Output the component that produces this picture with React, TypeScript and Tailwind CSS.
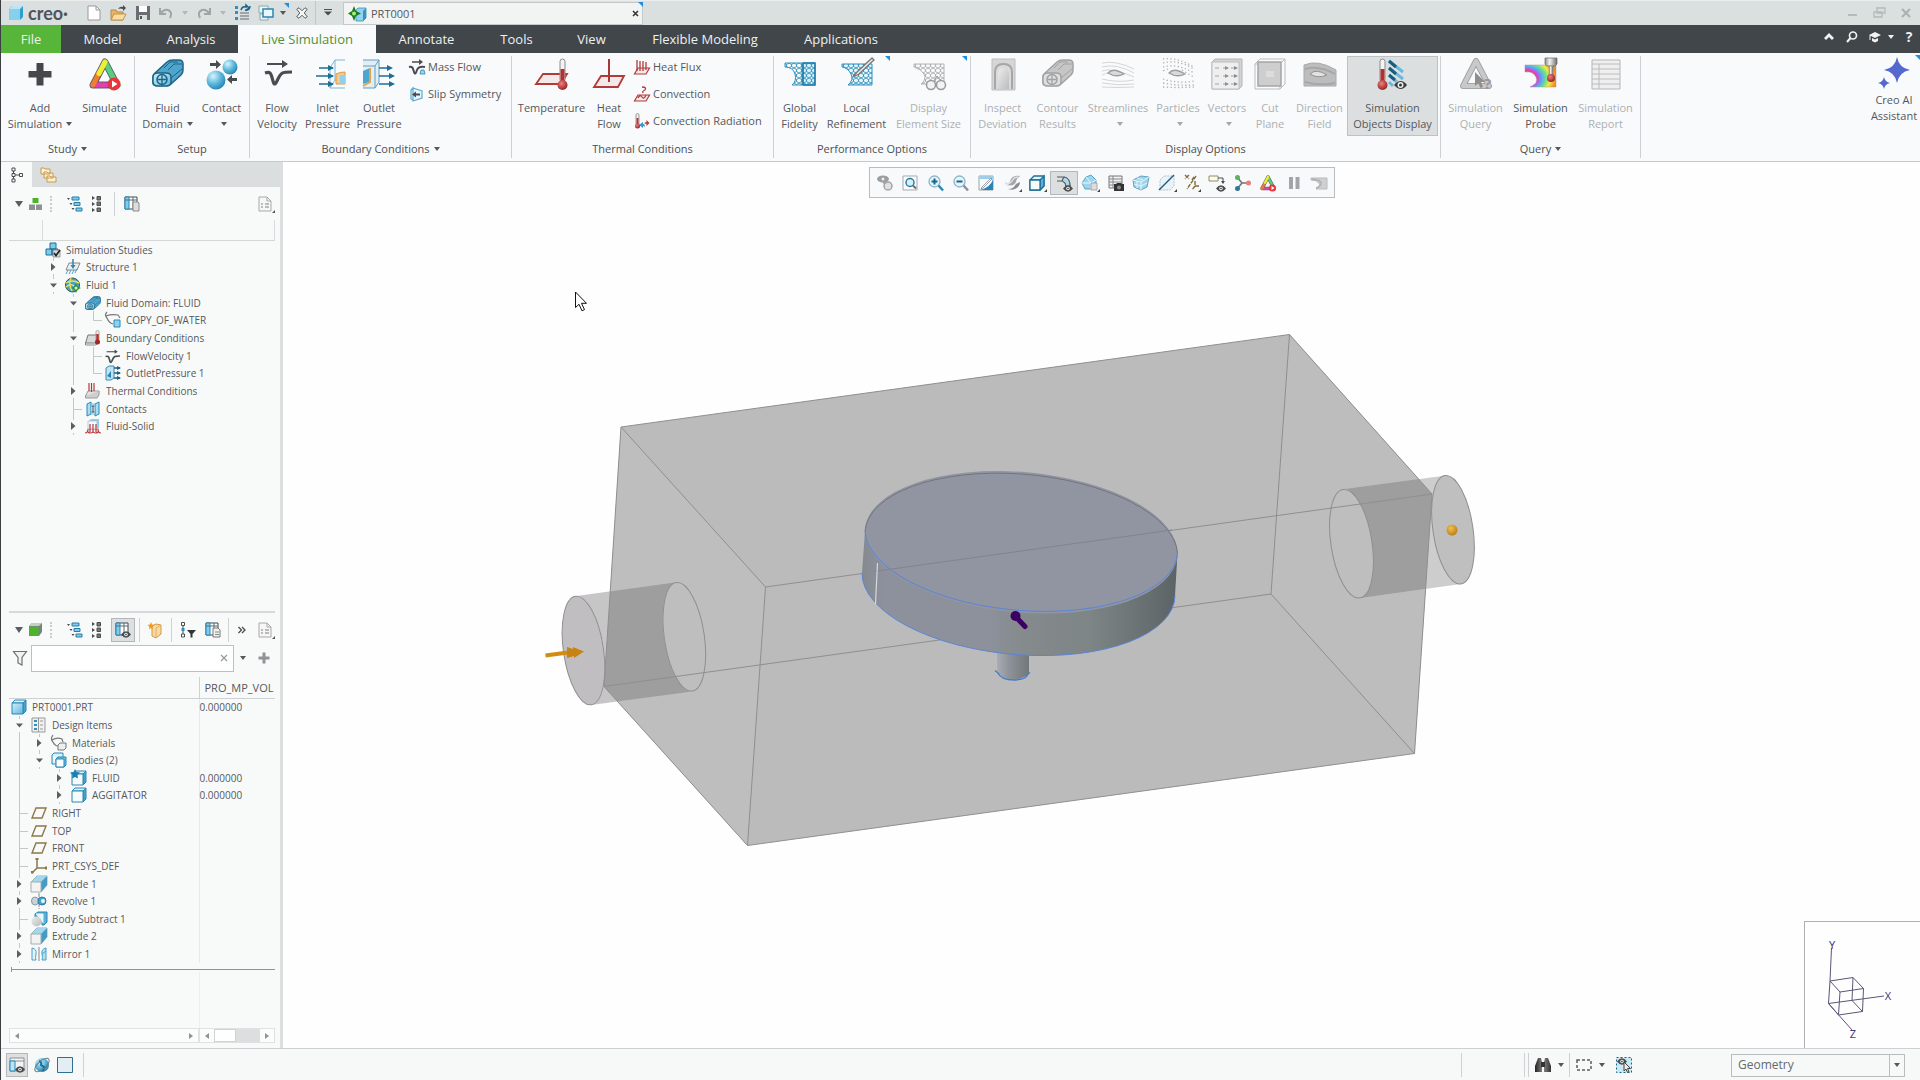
import React, { ReactNode } from "react";

const INK = "#4a4d50";
const BLUE = "#2f8fbf";

function Svg({ s = "size-4", vb = "0 0 16 16", children }: { s?: string; vb?: string; children: ReactNode }) {
  return (
    <svg aria-hidden="true" className={`${s} shrink-0 overflow-visible`} viewBox={vb} fill="none" stroke="none">
      {children}
    </svg>
  );
}

function Big({ children }: { children: ReactNode }) {
  return (
    <Svg s="size-8" vb="0 0 32 32">
      {children}
    </Svg>
  );
}

function Caret({ color = "#55585b" }: { color?: string }) {
  return (
    <svg aria-hidden="true" className="inline-block h-1 w-1.5 shrink-0" viewBox="0 0 6 4">
      <path d="M0 0h6L3 4z" fill={color} />
    </svg>
  );
}

function Corner() {
  return (
    <svg aria-hidden="true" className="size-[5px]" viewBox="0 0 5 5">
      <path d="M0 0h5v5z" fill="#1e8fe0" />
    </svg>
  );
}

function Defs() {
  return (
    <svg aria-hidden="true" className="absolute size-0">
      <defs>
        <linearGradient id="gCyan" x1="0" y1="0" x2="1" y2="1">
          <stop offset="0" stopColor="#d4f1fb" />
          <stop offset="1" stopColor="#5fb4dc" />
        </linearGradient>
        <linearGradient id="gGrey" x1="0" y1="0" x2="1" y2="1">
          <stop offset="0" stopColor="#ececec" />
          <stop offset="1" stopColor="#bcbcbc" />
        </linearGradient>
        <linearGradient id="gDark" x1="0" y1="0" x2="1" y2="0">
          <stop offset="0" stopColor="#222" />
          <stop offset="0.5" stopColor="#8a8a8a" />
          <stop offset="1" stopColor="#333" />
        </linearGradient>
        <radialGradient id="gBall" cx="0.35" cy="0.3" r="0.8">
          <stop offset="0" stopColor="#d8f4fd" />
          <stop offset="0.5" stopColor="#5fb9dd" />
          <stop offset="1" stopColor="#1c7ba8" />
        </radialGradient>
        <radialGradient id="gRed" cx="0.4" cy="0.35" r="0.7">
          <stop offset="0" stopColor="#f08080" />
          <stop offset="1" stopColor="#8f1c1c" />
        </radialGradient>
        <radialGradient id="gProbe" cx="0" cy="0.6" r="1">
          <stop offset="0.3" stopColor="#ee3b3b" />
          <stop offset="0.42" stopColor="#d14bd8" />
          <stop offset="0.54" stopColor="#58a8f6" />
          <stop offset="0.68" stopColor="#6fe08a" />
          <stop offset="0.82" stopColor="#f4ea3d" />
          <stop offset="1" stopColor="#f08a2a" />
        </radialGradient>
        <linearGradient id="gSteel" x1="0" y1="0" x2="1" y2="0">
          <stop offset="0" stopColor="#8d8d8d" />
          <stop offset="0.4" stopColor="#f2f2f2" />
          <stop offset="1" stopColor="#6d6d6d" />
        </linearGradient>
        <pattern id="pMesh" width="5" height="5" patternUnits="userSpaceOnUse">
          <path d="M0 0l2.5 1.5L5 0M2.5 1.5V3.5M0 5l2.5-1.5L5 5" stroke="#2c8cb8" strokeWidth="0.9" fill="none" />
        </pattern>
        <pattern id="pMeshG" width="5" height="5" patternUnits="userSpaceOnUse">
          <path d="M0 0l2.5 1.5L5 0M2.5 1.5V3.5M0 5l2.5-1.5L5 5" stroke="#a9a9a9" strokeWidth="0.9" fill="none" />
        </pattern>
        <linearGradient id="gSide" x1="0" y1="0" x2="1" y2="0">
          <stop offset="0" stopColor="#85898f" />
          <stop offset="0.07" stopColor="#8d919d" />
          <stop offset="0.4" stopColor="#8c919c" />
          <stop offset="0.52" stopColor="#858a8c" />
          <stop offset="0.72" stopColor="#7e8587" />
          <stop offset="0.88" stopColor="#6a7274" />
          <stop offset="1" stopColor="#5b6366" />
        </linearGradient>
        <linearGradient id="gStem" x1="0" y1="0" x2="1" y2="0">
          <stop offset="0" stopColor="#a9adb3" />
          <stop offset="0.35" stopColor="#8f939b" />
          <stop offset="1" stopColor="#71777a" />
        </linearGradient>
        <radialGradient id="gGold" cx="0.4" cy="0.35" r="0.7">
          <stop offset="0" stopColor="#f4c04e" />
          <stop offset="1" stopColor="#b87c12" />
        </radialGradient>
        <clipPath id="boxClip">
          <path d="M621 427L1289.500 334.500 1432 494 1414.500 753.500 747.500 845.500 604 686.500z" />
        </clipPath>
      </defs>
    </svg>
  );
}

/* ---------- shared drawings ---------- */

const Triangle = ({ dim = false }: { dim?: boolean }) =>
  dim ? (
    <g>
      <path d="M16 3L29 28H3z" stroke="#a5a5a5" strokeWidth="6" strokeLinejoin="round" fill="none" />
      <path d="M16 3L29 28H3z" stroke="#c9c9c9" strokeWidth="4" strokeLinejoin="round" fill="none" />
    </g>
  ) : (
    <g strokeLinejoin="round" strokeLinecap="round">
      <path d="M16 4L28 27H4z" stroke="#5d6166" strokeWidth="7" />
      <path d="M16 4L28 27" stroke="#58cf7c" strokeWidth="5" />
      <path d="M28 27L16 27" stroke="#5d3bd0" strokeWidth="5" />
      <path d="M17 27H4" stroke="#e33fae" strokeWidth="5" />
      <path d="M4 27L10 15" stroke="#f27d2d" strokeWidth="5" />
      <path d="M10 15.500L16 4" stroke="#eeee35" strokeWidth="5" />
    </g>
  );

const FluidBlock = ({ a = "url(#gCyan)", b = "#1d6485", c = "#4fa5cc" }: { a?: string; b?: string; c?: string }) => (
  <g stroke={b} strokeWidth="1.500" strokeLinejoin="round">
    <path d="M3 15L15 4q2-2 6-2h6q4 0 4 4v6q0 3-2 5L19 26q-2 1.500-3 1.500H4q-3 0-3-3V19q0-2 2-4z" fill={c} />
    <path d="M1 19q0-4 5-4h8q5 0 5 4v5q0 4-5 4H6q-5 0-5-4z" fill={a} />
    <circle cx="10" cy="21.500" r="5" fill="none" />
    <path d="M10 17v9M5.500 21.500h9" strokeWidth="1.300" />
    <path d="M12 10L18 4h8M16 12l6-6h8M19 20l11-9" strokeWidth="1" fill="none" />
  </g>
);

const Velocity = () => (
  <g stroke={INK} fill="none">
    <path d="M3 6h17" strokeWidth="2" />
    <path d="M18 2l6 4-6 4z" fill={INK} stroke="none" />
    <path d="M1 15c6-2 6 1 8 8 1 4 2 4 4 0 4-9 5-9 15-9" strokeWidth="3.200" />
  </g>
);

const Thermo = ({ x = 0, y = 0 }: { x?: number; y?: number }) => (
  <g transform={`translate(${x} ${y})`}>
    <rect x="2" y="0" width="5" height="23" rx="2.500" fill="#f4f4f4" stroke="#8c8c8c" />
    <rect x="2.500" y="10" width="4" height="15" fill="#b33030" />
    <circle cx="4.500" cy="26" r="5" fill="url(#gRed)" />
  </g>
);

const Cube = ({ light = false }: { light?: boolean }) => (
  <g stroke="#2b86b5" strokeWidth="1" strokeLinejoin="round">
    <path d="M1 4l3-3h11l-3 3z" fill="#d7f2fb" />
    <path d="M15 1v11l-3 3V4z" fill="#49a3cd" />
    <path d="M1 4h11v11H1z" fill={light ? "#f6fbfd" : "url(#gCyan)"} />
  </g>
);

const Doc = () => (
  <g>
    <path d="M2 1h8l4 4v10H2z" fill="#f6f6f6" stroke="#a8a8a8" />
    <path d="M10 1v4h4" stroke="#a8a8a8" />
    <path d="M4 8h2M4 11h2M8 8h4M8 11h4" stroke="#a8a8a8" strokeWidth="1.500" />
    <path d="M18 14v3h-3z" fill="#555" />
  </g>
);

const Eye = ({ x = 0, y = 0 }: { x?: number; y?: number }) => (
  <g transform={`translate(${x} ${y})`}>
    <path d="M0 3.500q5-6.500 10 0q-5 6.500-10 0z" fill="#4b4b4b" />
    <circle cx="5" cy="3.500" r="1.800" fill="#eee" />
    <circle cx="5" cy="3.500" r="0.800" fill="#333" />
  </g>
);

const Columns = ({ children }: { children?: ReactNode }) => (
  <Svg>
    <path d="M1 1h12v12H1z" fill="#fff" stroke="#3f4a50" />
    <path d="M1 1h4v12H1z" fill="#7fcdec" stroke="#2b86b5" />
    <path d="M1 4h12M9 1v12" stroke="#5d6a70" />
    {children}
  </Svg>
);

const OutlineTree = () => (
  <Svg>
    <path d="M0 2h3L1.500 4zM2.500 7h3L4 9zM4.500 12h3L6 14z" fill={INK} />
    <path d="M5 1h7v3H5zM7 6.500h6v3H7zM9 12h6v3H9z" fill="#7fcdec" stroke="#2b7ca6" />
  </Svg>
);

const Branches = () => (
  <Svg>
    <path d="M2 0l3 2-3 2zM2 6l3 2-3 2zM2 12l3 2-3 2z" fill={INK} />
    <path d="M7 0.500h3.500V4H7zM7 6h3.500v3.500H7zM7 12h3.500v3.500H7z" fill="#777" stroke={INK} />
  </Svg>
);

const Grip = () => <span className="h-4 w-0 border-l-2 border-dotted border-[#c9cccc]" />;

/* ---------- ribbon icons ---------- */

const Sheet = ({ d, s = 1.8 }: { d: string; s?: number }) => <path d={d} stroke="#b23a3a" strokeWidth={s} fill="#f3e9e9" />;

const icons = {
  add: (
    <Big>
      <path d="M12.500 5h7v8h8v6.500h-8v8h-7v-8h-8V13h8z" fill="#45484b" />
    </Big>
  ),
  simulate: (
    <Big>
      <Triangle />
      <circle cx="25" cy="26" r="6.500" fill="#e8363c" />
      <path d="M23 22.500l5.500 3.500-5.500 3.500z" fill="#fff" />
    </Big>
  ),
  fluid: (
    <Big>
      <FluidBlock />
    </Big>
  ),
  contact: (
    <Big>
      <circle cx="24" cy="9" r="7.500" fill="url(#gBall)" />
      <circle cx="10" cy="22" r="9.500" fill="url(#gBall)" />
      <path d="M4 5h6V2l5 4.500L10 11V8H4zM31 20h-5v-3l-5 4.500 5 4.500v-3h5z" fill={INK} />
    </Big>
  ),
  velocity: (
    <Big>
      <g transform="translate(3 0)">
        <Velocity />
      </g>
    </Big>
  ),
  inlet: (
    <Big>
      <g transform="translate(3 0)">
        <path d="M15 10l5-8h10M15 10v20h15M20 2v20l-5 8M20 22h10" stroke="#7fb6d3" />
        <path d="M21 16q4-2 9-2v12h-9z" fill="#f6c98a" stroke="#d49a4c" />
        <path d="M25 17h5v9h-5z" fill="#8fd0ee" />
        <path d="M4 10h14M1 18h17M4 26h14" stroke="#1f6f94" strokeWidth="1.500" />
        <path d="M13 7l6 3-6 3zM13 15l6 3-6 3zM13 23l6 3-6 3z" fill="#1f6f94" />
      </g>
    </Big>
  ),
  outlet: (
    <Big>
      <path d="M0 2h16v22L12 30H0M16 2L12 8H0M12 8v22" stroke="#5f9fc2" fill="#e3edf3" />
      <path d="M0 13l7-3v14l-7 2z" fill="#4aa6d3" />
      <path d="M7 10v14l-7 4" stroke="#e0a44c" strokeWidth="2" />
      <path d="M16 10h10M16 18h13M16 26h13" stroke="#1f6f94" strokeWidth="1.500" />
      <path d="M24 7l6 3-6 3zM26 15l6 3-6 3zM26 23l6 3-6 3z" fill="#1f6f94" />
    </Big>
  ),
  temperature: (
    <Big>
      <Sheet d="M7 16h24l-6 10H0z" />
      <Thermo x={22} y={1} />
    </Big>
  ),
  heatFlow: (
    <Big>
      <Sheet d="M8 18h23l-6 11H1z" />
      <path d="M16 1v23" stroke="#a83838" strokeWidth="2" />
    </Big>
  ),
  fidelity: (
    <Big>
      <path d="M1 5h17v22H8q5-4 3-11T1 9z" fill="url(#pMesh)" stroke={BLUE} />
      <path d="M19 5h12v22H19z" fill="#d4effa" stroke={BLUE} />
      <path d="M19 5h12v22H19z" fill="url(#pMesh)" stroke="#1f7ca8" strokeWidth="1.500" />
    </Big>
  ),
  refine: (
    <Big>
      <path d="M1 6h30v21H7q6-5 3-11T1 9z" fill="#e4f5fc" />
      <path d="M1 6h30v21H7q6-5 3-11T1 9z" fill="url(#pMesh)" stroke={BLUE} />
      <path d="M31 0L16 14l-4 5 6-3L33 2z" fill="#e9e9e9" stroke="#777" strokeWidth="1.300" />
    </Big>
  ),
  elemSize: (
    <Big>
      <path d="M1 6h30v20H8q6-5 3-10T1 9z" fill="url(#pMeshG)" stroke="#b4b4b4" />
      <circle cx="18" cy="27" r="4.500" fill="#f3f3f3" stroke="#999" strokeWidth="1.500" />
      <circle cx="28" cy="27" r="4.500" fill="#f3f3f3" stroke="#999" strokeWidth="1.500" />
      <path d="M21 23l3-5 4 5" stroke="#999" />
    </Big>
  ),
  inspect: (
    <Big>
      <path d="M5 1h23v31H5z" fill="#d6d6d6" stroke="#bdbdbd" />
      <path d="M8 31V14q0-8 8.500-8T25 14v17" fill="#dadada" stroke="#a6a6a6" strokeWidth="2" />
      <path d="M11 31V16q0-6 5.500-6T22 16v15z" fill="url(#gGrey)" />
    </Big>
  ),
  contour: (
    <Big>
      <FluidBlock a="#dedede" b="#a2a2a2" c="#c6c6c6" />
    </Big>
  ),
  stream: (
    <Big>
      <path d="M0 5q14-3 32 6M0 9q14-4 32 6M0 13q10-4 32 6M0 17q4-2 6-2M0 21q16 4 32 1M0 25q16 3 32 1M0 29q16 1 32 0" stroke="#d6d6d6" />
      <path d="M6 15q5-6 16 1-8 4-16-1z" fill="#dadada" stroke="#9d9d9d" strokeWidth="1.300" />
    </Big>
  ),
  particles: (
    <Big>
      <path
        d="M1 1q14-2 31 8M1 5q14-4 31 6M1 9q14-4 31 6M1 13q4-2 6-2M20 12q6 4 12 7M1 21q16 5 31 2M1 25q16 3 31 2M1 29q16 1 31 0"
        stroke="#b0b0b0"
        strokeWidth="1.300"
        strokeDasharray="1.300 2.400"
      />
      <path d="M7 15q5-6 16 1-8 4-16-1z" fill="#dadada" stroke="#9d9d9d" strokeWidth="1.300" />
    </Big>
  ),
  vectors: (
    <Big>
      <path d="M1 4l3-3h27v27l-3 3H1z" fill="#d3d3d3" stroke="#b4b4b4" />
      <path d="M1 4h27v27H1z" fill="#efefef" stroke="#bdbdbd" />
      <path d="M4 10h5M4 18h5M4 26h5M12 10h5M12 18h5M12 26h5M20 10h6M20 18h6M20 26h6" stroke="#a4a4a4" strokeWidth="1.200" strokeDasharray="4 1" />
      <path d="M23 8l4 2-4 2zM23 16l4 2-4 2zM23 24l4 2-4 2zM14 8l4 2-4 2zM14 16l4 2-4 2zM14 24l4 2-4 2z" fill="#8e8e8e" />
    </Big>
  ),
  cut: (
    <Big>
      <path d="M1 6l5-5h25v25l-5 5H1zM1 6h25v25M26 6l5-5" stroke="#bdbdbd" />
      <path d="M4 4h23v24H4z" fill="#cecece" stroke="#a5a5a5" strokeWidth="1.500" />
      <path d="M12 13h8v6h-8z" fill="#dcdcdc" />
    </Big>
  ),
  direction: (
    <Big>
      <path d="M0 7q14-6 32 5v16H0z" fill="#bdbdbd" stroke="#a8a8a8" />
      <path d="M1 11q14-4 30 5M1 24q14 4 30 1" stroke="#a7a7a7" strokeWidth="2" />
      <path d="M6 16q6-6 17 1-9 4-17-1z" fill="#e2e2e2" stroke="#919191" />
    </Big>
  ),
  objects: (
    <Big>
      <Thermo x={1} y={1} />
      <path d="M12 3l14 11M12 10l14 11M12 17l8 7M12 24l4 4" stroke="#69b9dc" strokeWidth="3" />
      <path d="M12 3l7 6M12 10l7 6M12 17l6 5" stroke="#1c5d7f" strokeWidth="3" />
      <path d="M17 27q7-8 13 0q-6 8-13 0z" fill="#3c3c3c" />
      <circle cx="23.500" cy="27" r="3" fill="#eee" />
      <circle cx="23.500" cy="27" r="1.500" fill="#333" />
    </Big>
  ),
  query: (
    <Big>
      <Triangle dim />
      <path d="M15 14v14l3.500-3 2 5 2.500-1-2-5h4z" fill="#8e8e8e" />
      <text x="24" y="31" fontSize="15" fontFamily="Noto Sans" fontWeight="700" fill="#999">
        ?
      </text>
    </Big>
  ),
  probe: (
    <Big>
      <path d="M0 7h31v22H5q9-4 6-10T0 14z" fill="url(#gProbe)" stroke="#999" strokeWidth="0.500" />
      <path d="M20 0h12v6l-2 2h-8l-2-2z" fill="url(#gSteel)" stroke="#666" strokeWidth="0.700" />
      <path d="M24 8h4v9h-4z" fill="url(#gSteel)" stroke="#777" strokeWidth="0.500" />
      <circle cx="26" cy="20" r="4" fill="url(#gRed)" />
    </Big>
  ),
  report: (
    <Big>
      <path d="M2 2h28v29H2z" fill="#efefef" stroke="#b5b5b5" />
      <path d="M2 6h28M2 11h28M2 16h28M2 21h28M2 26h28M9 6v25" stroke="#bcbcbc" />
    </Big>
  ),
  ai: (
    <Big>
      <path d="M19 0q2 11 13 13-11 2-13 13Q17 15 6 13 17 11 19 0z" fill="#5468cf" />
      <path d="M6 20q1 5 6 6-5 1-6 6-1-5-6-6 5-1 6-6z" fill="#5468cf" />
    </Big>
  ),
  massFlow: (
    <Svg>
      <path d="M3 3h9" stroke={INK} strokeWidth="1.500" />
      <path d="M10 0l4 3-4 3z" fill={INK} />
      <path d="M0 8c4-1 4 2 5 5s2 1 3-2 3-4 8-3" stroke={INK} strokeWidth="2" />
      <path d="M11 15l1-4h3l1 4z" fill="#9ad6ef" stroke="#2b86b5" strokeWidth="0.800" />
    </Svg>
  ),
  slip: (
    <Svg>
      <path d="M2 4l2-2v12l-2-1zM4 2l9 3v7l-9 3z" fill="#e7f6fc" stroke="#5aacd2" strokeWidth="1.200" />
      <path d="M3 8.500l4-3v2h4v2H7v2z" fill={INK} />
    </Svg>
  ),
  heatFlux: (
    <Svg>
      <Sheet d="M4 9h11.500L12 15H0.500z" s={1.2} />
      <path d="M3 1v11M6 2v10M9 2v10M12 3v8" stroke="#b23a3a" strokeWidth="1.300" />
    </Svg>
  ),
  convection: (
    <Svg>
      <Sheet d="M4 9h11.500L12 15H0.500z" s={1.2} />
      <path d="M8 1q5 0 3 3-3 1-2 3M4 12q2-4 4-1t4-2" stroke="#b23a3a" strokeWidth="1.300" />
    </Svg>
  ),
  radiation: (
    <Svg>
      <rect x="2" y="0.500" width="3" height="12" rx="1.500" fill="#eee" stroke="#777" strokeWidth="0.700" />
      <path d="M3.500 5v8" stroke="#b23a3a" strokeWidth="2" />
      <circle cx="3.500" cy="13" r="2.500" fill="url(#gRed)" />
      <path d="M5 12l4-3v2q2 0 2 3-1-1-2-1v2z" fill="#3a97c9" />
      <path d="M15.500 10l-3-3v2q-2 0-2 2 1-.5 2-.5V13z" fill="#c03636" />
    </Svg>
  ),
};

function RibbonButton({
  w,
  icon,
  lines,
  caret,
  dim,
  active,
  corner,
}: {
  w: string;
  icon: ReactNode;
  lines: string[];
  caret?: boolean;
  dim?: boolean;
  active?: boolean;
  corner?: boolean;
}) {
  return (
    <button
      type="button"
      className={`relative flex h-20 shrink-0 flex-col items-center whitespace-nowrap text-[11px] leading-4 ${w} ${
        dim ? "text-[#adb0b2]" : "text-[#55585b]"
      } ${active ? "border border-[#bfc2c4] bg-[#dcdfe0] pt-px" : "pt-[2px]"}`}
    >
      {icon}
      <span className="mt-[10px]">{lines[0]}</span>
      <span className="flex items-center gap-1">
        {lines[1] || <span className="invisible w-0">.</span>}
        {caret && <Caret color={dim ? "#a5a8aa" : "#55585b"} />}
      </span>
      {corner && (
        <span className="absolute top-0 right-0">
          <Corner />
        </span>
      )}
    </button>
  );
}

function SmallButton({ icon, label }: { icon: ReactNode; label: string }) {
  return (
    <button type="button" className="flex h-[27px] items-start gap-[3px] pt-[3px] text-[11px] leading-4 whitespace-nowrap text-[#55585b]">
      {icon}
      {label}
    </button>
  );
}

function Group({ w, label, caret, pad, children }: { w: string; label: string; caret?: boolean; pad: string; children: ReactNode }) {
  return (
    <section className={`my-[3px] flex shrink-0 flex-col border-r border-[#cdd1d3] ${w}`} aria-label={label}>
      <div className={`flex h-20 items-start ${pad}`}>{children}</div>
      <div className="mt-[5px] flex items-center justify-center gap-1 text-[11px] leading-4 text-[#4c4f52]">
        {label}
        {caret && <Caret />}
      </div>
    </section>
  );
}

function Ribbon() {
  return (
    <div className="flex h-[109px] shrink-0 items-stretch border-b border-[#c6caca] bg-[#f8fafc]">
      <Group w="w-[134px]" label="Study" caret pad="">
        <RibbonButton w="w-[78px]" icon={icons.add} lines={["Add", "Simulation"]} caret />
        <RibbonButton w="w-[51px]" icon={icons.simulate} lines={["Simulate"]} />
      </Group>
      <Group w="w-[115px]" label="Setup" caret={false} pad="pl-1">
        <RibbonButton w="w-[57px]" icon={icons.fluid} lines={["Fluid", "Domain"]} caret />
        <RibbonButton w="w-[51px]" icon={icons.contact} lines={["Contact"]} caret />
      </Group>
      <Group w="w-[262px]" label="Boundary Conditions" caret pad="pl-[2px]">
        <RibbonButton w="w-[50px]" icon={icons.velocity} lines={["Flow", "Velocity"]} />
        <RibbonButton w="w-[51px]" icon={icons.inlet} lines={["Inlet", "Pressure"]} />
        <RibbonButton w="w-[52px]" icon={icons.outlet} lines={["Outlet", "Pressure"]} />
        <div className="flex flex-col pl-1">
          <SmallButton icon={icons.massFlow} label="Mass Flow" />
          <SmallButton icon={icons.slip} label="Slip Symmetry" />
        </div>
      </Group>
      <Group w="w-[262px]" label="Thermal Conditions" pad="pl-[2px]">
        <RibbonButton w="w-[75px]" icon={icons.temperature} lines={["Temperature"]} />
        <RibbonButton w="w-[40px]" icon={icons.heatFlow} lines={["Heat", "Flow"]} />
        <div className="flex flex-col pl-[5px]">
          <SmallButton icon={icons.heatFlux} label="Heat Flux" />
          <SmallButton icon={icons.convection} label="Convection" />
          <SmallButton icon={icons.radiation} label="Convection Radiation" />
        </div>
      </Group>
      <Group w="w-[197px]" label="Performance Options" pad="pl-[2px]">
        <RibbonButton w="w-[47px]" icon={icons.fidelity} lines={["Global", "Fidelity"]} />
        <RibbonButton w="w-[67px]" icon={icons.refine} lines={["Local", "Refinement"]} corner />
        <RibbonButton w="w-[77px]" icon={icons.elemSize} lines={["Display", "Element Size"]} dim corner />
      </Group>
      <Group w="w-[470px]" label="Display Options" pad="pl-[5px]">
        <RibbonButton w="w-[53px]" icon={icons.inspect} lines={["Inspect", "Deviation"]} dim />
        <RibbonButton w="w-[57px]" icon={icons.contour} lines={["Contour", "Results"]} dim />
        <RibbonButton w="w-[64px]" icon={icons.stream} lines={["Streamlines"]} caret dim />
        <RibbonButton w="w-[56px]" icon={icons.particles} lines={["Particles"]} caret dim />
        <RibbonButton w="w-[42px]" icon={icons.vectors} lines={["Vectors"]} caret dim />
        <RibbonButton w="w-[44px]" icon={icons.cut} lines={["Cut", "Plane"]} dim />
        <RibbonButton w="w-[55px]" icon={icons.direction} lines={["Direction", "Field"]} dim />
        <RibbonButton w="w-[91px]" icon={icons.objects} lines={["Simulation", "Objects Display"]} active />
      </Group>
      <Group w="w-[200px]" label="Query" caret pad="pl-[2px]">
        <RibbonButton w="w-[65px]" icon={icons.query} lines={["Simulation", "Query"]} dim />
        <RibbonButton w="w-[65px]" icon={icons.probe} lines={["Simulation", "Probe"]} />
        <RibbonButton w="w-[65px]" icon={icons.report} lines={["Simulation", "Report"]} dim />
      </Group>
      <button
        type="button"
        className="relative ml-auto flex w-[52px] flex-col items-center pt-1 text-[11px] leading-4 whitespace-nowrap text-[#55585b]"
      >
        {icons.ai}
        <span className="mt-[3px]">Creo AI</span>
        <span>Assistant</span>
        <span className="absolute top-[2px] right-0">
          <Corner />
        </span>
      </button>
    </div>
  );
}

/* ---------- title bar and menu ---------- */

function TB({ w, label, children }: { w: string; label: string; children: ReactNode }) {
  return (
    <button type="button" aria-label={label} className={`relative flex h-6 shrink-0 items-center justify-center ${w}`}>
      {children}
    </button>
  );
}

function TitleBar() {
  return (
    <header className="flex h-[25px] shrink-0 items-center border-t border-[#eceeee] bg-[#dadfe0]">
      <div className="flex w-[81px] items-center gap-1 pl-[7px]">
        <Svg>
          <path d="M1 4l3-3h11v11l-3 3H1z" fill="#2f9fd0" />
          <path d="M1 4h11v11H1z" fill="#86d0ec" />
          <path d="M1 4l3-3h11l-3 3z" fill="#b9e6f6" />
        </Svg>
        <span className="font-['Lato'] text-[18px] leading-5 font-bold text-[#50555a]">creo·</span>
      </div>
      <TB w="w-[24px]" label="New">
        <Svg>
          <path d="M2 1h8l4 4v10H2z" fill="#fff" stroke="#9a9a9a" />
          <path d="M10 1v4h4" stroke="#9a9a9a" />
        </Svg>
      </TB>
      <TB w="w-[24px]" label="Open">
        <Svg>
          <path d="M1 15V5h5l1 2h6v8z" fill="#e5b469" stroke="#b98a45" />
          <path d="M1 15l3-6h12l-3 6z" fill="#fbdca4" stroke="#c3954e" />
          <path d="M8 4q2-3 5-2V0l3 3-3 3V4q-3-1-5 0z" fill={INK} />
        </Svg>
      </TB>
      <TB w="w-[25px]" label="Save">
        <Svg>
          <path d="M1 1h14v14H1z" fill="#6a6e72" />
          <path d="M4 1h8v6H4z" fill="#fff" />
          <path d="M4 10h8v5H4z" fill="#dcdfe0" />
          <path d="M5 11h2v3H5z" fill="#555" />
        </Svg>
      </TB>
      <TB w="w-[22px]" label="Undo">
        <Svg>
          <path d="M2 3v6h6M3 8q3-4 7-3 5 2 2 8" stroke="#9fa4a6" strokeWidth="2" />
        </Svg>
      </TB>
      <TB w="w-[16px]" label="Undo list">
        <Caret color="#b3b8ba" />
      </TB>
      <TB w="w-[22px]" label="Redo">
        <Svg>
          <path d="M14 3v6H8M13 8q-3-4-7-3-5 2-2 8" stroke="#9fa4a6" strokeWidth="2" />
        </Svg>
      </TB>
      <TB w="w-[16px]" label="Redo list">
        <Caret color="#b3b8ba" />
      </TB>
      <TB w="w-[23px]" label="Regenerate">
        <Svg>
          <path d="M0 1h3v3H0zM0 6h3v3H0zM0 12h3v3H0z" fill={BLUE} />
          <path d="M5 8h9M5 11h9M5 14h9" stroke="#8e9396" strokeWidth="1.500" />
          <path d="M6 5q1-4 5-3V0l3 3-3 2M15 1q0 5-5 4" stroke="#17668c" strokeWidth="1.500" />
        </Svg>
      </TB>
      <TB w="w-[23px]" label="Windows">
        <Svg>
          <path d="M1 1h9v7H1zM2 9h8v6H2z" stroke="#8aa" fill="#eef4f6" />
          <path d="M5 4h10v8H5z" stroke="#2b86b5" strokeWidth="1.500" fill="#e9f6fb" />
        </Svg>
      </TB>
      <TB w="w-[12px]" label="Windows list">
        <Caret />
        <span className="absolute top-0.5 right-0">
          <Corner />
        </span>
      </TB>
      <TB w="w-[26px]" label="Close window">
        <Svg s="size-3">
          <path d="M1 3l3-2 4 4 4-4 3 2-4 5 4 5-3 2-4-4-4 4-3-2 4-5z" fill="#f4f4f4" stroke="#55595c" strokeWidth="1.300" />
        </Svg>
      </TB>
      <span className="h-full w-px bg-[#c2c7c9]" />
      <TB w="w-[23px]" label="Customize toolbar">
        <svg aria-hidden="true" className="h-2 w-2" viewBox="0 0 8 8">
          <path d="M0 0.500h8" stroke={INK} />
          <path d="M0 2.500h8l-4 4z" fill={INK} />
        </svg>
      </TB>
      <div className="relative ml-1 flex h-[23px] w-[300px] items-center gap-1 border border-[#c3c8ca] bg-[#f2f3f3] pt-px pl-1">
        <Svg s="h-4 w-[19px]" vb="0 0 19 16">
          <path d="M8 4l2-2h8v10l-3 3H8z" fill="#8fd3ee" stroke="#3b90b8" strokeWidth="0.800" />
          <path d="M15 5l3-3v10l-3 3z" fill="#3a93bf" />
          <path d="M6 0l2 5 5 2.500-5 2.500-2 5-2-5-4-2.500L4 5z" fill="#1e7d1b" />
          <circle cx="6" cy="7.500" r="2" fill="#a5ef7c" />
        </Svg>
        <span className="text-[11px] leading-4 text-[#55585b]">PRT0001</span>
        <button type="button" aria-label="Close tab" className="absolute right-0.5 bottom-1.5 size-2">
          <Svg s="size-[7px]" vb="0 0 7 7">
            <path d="M1 1l5 5M6 1L1 6" stroke="#333" strokeWidth="1.500" />
          </Svg>
        </button>
        <span className="absolute -top-px -right-px">
          <Corner />
        </span>
      </div>
      <div className="ml-auto flex items-center gap-[11px] pr-[6px]">
        <TB w="w-4" label="Minimize">
          <Svg>
            <path d="M4 10h9" stroke="#b4babc" strokeWidth="2" />
          </Svg>
        </TB>
        <TB w="w-4" label="Restore">
          <Svg>
            <path d="M6 3h8v5H6zM3 7h8v5H3z" fill="#dadfe0" stroke="#b4babc" strokeWidth="1.300" />
          </Svg>
        </TB>
        <TB w="w-4" label="Close">
          <Svg>
            <path d="M4 4l8 8M12 4l-8 8" stroke="#aab0b2" strokeWidth="2" />
          </Svg>
        </TB>
      </div>
    </header>
  );
}

const menu: [string, string][] = [
  ["Model", "w-[83px]"],
  ["Analysis", "w-[94px]"],
  ["Live Simulation", "w-[138px]"],
  ["Annotate", "w-[101px]"],
  ["Tools", "w-[79px]"],
  ["View", "w-[71px]"],
  ["Flexible Modeling", "w-[156px]"],
  ["Applications", "w-[116px]"],
];

function MenuBar() {
  return (
    <nav className="flex h-[28px] shrink-0 bg-[#40464a] text-[13px] leading-7 text-[#eef0f1]">
      <button type="button" className="w-[60px] bg-[#57b63a]">
        File
      </button>
      {menu.map(([name, w]) => (
        <button key={name} type="button" className={`${w} ${name === "Live Simulation" ? "bg-[#f8fafc] text-[#4f9138]" : ""}`}>
          {name}
        </button>
      ))}
      <div className="ml-auto flex items-center gap-[7px] pr-[3px] pb-1">
        <button type="button" aria-label="Minimize ribbon" className="pr-1">
          <Svg s="size-3" vb="0 0 12 12">
            <path d="M6 2l5 5-2 2-3-3-3 3-2-2z" fill="#f2f2f2" />
          </Svg>
        </button>
        <button type="button" aria-label="Search" className="pr-1">
          <Svg s="size-3" vb="0 0 12 12">
            <circle cx="7" cy="4.500" r="3.500" stroke="#f2f2f2" strokeWidth="1.700" />
            <path d="M4.500 7L1 11" stroke="#f2f2f2" strokeWidth="2" />
          </Svg>
        </button>
        <button type="button" aria-label="Learning">
          <Svg s="size-3" vb="0 0 12 12">
            <path d="M0 4l6-3 6 3-6 3zM3 7l3 1.500L9 7v3l-3 1.500L3 10zM0.500 4.500h1V9h-1z" fill="#f2f2f2" />
          </Svg>
        </button>
        <Caret color="#f2f2f2" />
        <button type="button" aria-label="Help" className="w-4 text-[14px] leading-6 font-bold">
          ?
        </button>
      </div>
    </nav>
  );
}

/* ---------- trees ---------- */

const t = {
  studies: (
    <Svg>
      <path d="M5 1h6v6H5zM1 7h6v6H1zM7 7h6v6H7z" fill="#7ccbea" stroke="#1f6f96" />
      <path d="M8 8h7v7H8z" fill="#d9d9d9" stroke="#777" strokeWidth="0.700" />
      <path d="M9 11l2 2.500L15 8" stroke="#222" strokeWidth="1.700" />
    </Svg>
  ),
  structure: (
    <Svg>
      <path d="M4 4h11l-3 7H1z" fill="#ededed" stroke="#888" />
      <path d="M8 0v8" stroke="#2b86b5" strokeWidth="1.500" />
      <path d="M5.500 6h5L8 10z" fill="#2b86b5" />
      <path d="M3 11l-2 4M6 11l-2 4M9 11l-2 4M12 10l-2 4" stroke="#4aa0cc" />
    </Svg>
  ),
  fluid: (
    <Svg>
      <circle cx="7.500" cy="8" r="7" fill="#4aa0cc" stroke="#356" />
      <path d="M1 6q6-4 13 0M1 10q5-4 8-1M6 1q-3 6 1 13" stroke="#e8e05a" strokeWidth="1.500" />
      <path d="M11 6l1.500 3.500L16 11l-3.500 1.500L11 16l-1.500-3.500L6 11l3.500-1.500z" fill="#2f8f1f" />
      <circle cx="11" cy="11" r="1.500" fill="#d8f5c0" />
    </Svg>
  ),
  domain: (
    <Svg vb="0 0 32 30">
      <FluidBlock />
    </Svg>
  ),
  copy: (
    <Svg>
      <path d="M2 0q-3 3 0 6M1 4q5-2 12-1l2 3M2 6q2 5 6 6" stroke="#777" strokeWidth="1.200" />
      <path d="M9 8h6v7H9z" fill="#8ed4f0" stroke="#2b86b5" />
    </Svg>
  ),
  boundary: (
    <Svg>
      <path d="M3 5h10l-2 8H0.500z" fill="#d9d9d9" stroke="#777" />
      <path d="M0.500 13v2H11l4-4" stroke="#888" />
      <rect x="11" y="0.500" width="3" height="11" rx="1.500" fill="#f5f5f5" stroke="#888" strokeWidth="0.700" />
      <path d="M12.500 4v8" stroke="#b33030" strokeWidth="2.500" />
      <circle cx="12.500" cy="12" r="2.500" fill="#a52626" />
    </Svg>
  ),
  velocity: (
    <Svg vb="0 0 30 28">
      <Velocity />
    </Svg>
  ),
  outlet: (
    <Svg>
      <path d="M1 3l3-2h5v12l-3 2H1z" fill="#bfe3f2" stroke="#3c88af" />
      <path d="M2 11l4-5v7z" fill="#2b86b5" />
      <path d="M9 3h6M9 8h6M9 13h6" stroke="#1f5f80" strokeWidth="1.500" />
      <path d="M12 1l4 2-4 2zM12 6l4 2-4 2zM12 11l4 2-4 2z" fill="#1f5f80" />
    </Svg>
  ),
  thermal: (
    <Svg>
      <path d="M3 8h11l-1 5H0.500z" fill="#e2e2e2" stroke="#999" />
      <path d="M0.500 13v2H12l2-3V8" stroke="#999" fill="#cfcfcf" />
      <path d="M4 0v8M6.500 0v9M9 0v8" stroke="#b33a3a" strokeWidth="1.200" />
    </Svg>
  ),
  contacts: (
    <Svg>
      <path d="M2 3l4-2v12l-4 2zM10 3l4-2v12l-4 2z" fill="#a9def2" stroke="#2b86b5" />
      <path d="M6 3h4v10H6z" fill="#d4eff9" stroke="#5aacd2" strokeWidth="0.700" />
      <path d="M8 5v6M6.500 5h3M6.500 11h3" stroke={INK} />
    </Svg>
  ),
  fluidSolid: (
    <Svg>
      <path d="M4 3l2-2h8v9l-2 2H4z" fill="#8fd0ec" />
      <path d="M3 3h9v8H3z" fill="#f5f8fa" stroke="#9bbccc" strokeWidth="0.700" />
      <path d="M5 6v8M8 6v8M11 6v8M0 15q3 0 3-4M16 15q-3 0-3-4M3 14q2 2 5 0 3 2 5 0" stroke="#c03636" strokeWidth="1.200" />
    </Svg>
  ),
  part: (
    <Svg>
      <Cube />
    </Svg>
  ),
  body: (
    <Svg>
      <Cube light />
    </Svg>
  ),
  fluidBody: (
    <Svg>
      <Cube light />
      <path d="M4 -1l1.500 3 3.500.5-2.500 2.500.5 3.500L4 7 1 8.500 1.500 5-1 2.500 2.500 2z" fill="#1c7fb2" />
    </Svg>
  ),
  bodies: (
    <Svg>
      <path d="M1 3l2-2h9v9M1 3v9h3" fill="#d9f1fa" stroke="#2b86b5" />
      <path d="M5 7l2-2h8v8l-2 2H5z" fill="#6bbfe2" stroke="#2b86b5" />
      <path d="M5 7h8v8H5z" fill="#f8fcfe" stroke="#2b86b5" />
    </Svg>
  ),
  design: (
    <Svg>
      <path d="M1 1h13v14H1z" fill="#f1f1f1" stroke="#999" />
      <path d="M3 3h3v2H3zM3 7h3v2H3zM3 11h3v2H3z" fill={BLUE} />
      <path d="M9 4h3M9 8h3M9 12h3M7.500 1v14" stroke="#999" />
    </Svg>
  ),
  materials: (
    <Svg>
      <path d="M2 0q-3 4 0 7M1 5q5-3 10-1l1 3M2 7q2 4 5 4" stroke="#777" strokeWidth="1.200" />
      <path d="M7 10l2-2h6v5l-2 2H7z" fill="#eee" stroke="#777" />
    </Svg>
  ),
  plane: (
    <Svg>
      <path d="M5 3h10l-4 10H1z" stroke="#8c7747" strokeWidth="1.400" />
    </Svg>
  ),
  csys: (
    <Svg>
      <path d="M6 1v9h9M6 10l-5 5" stroke="#8c7747" strokeWidth="1.500" />
      <path d="M4.500 0h3v2h-3zM14 8.500h2v3h-2zM0 13h2.500v2.500H0z" fill="#8c7747" />
    </Svg>
  ),
  extrude: (
    <Svg>
      <path d="M0 6l6-6h10v9l-6 7z" fill="#3f9ec8" stroke="#6d8c9a" strokeWidth="0.700" />
      <path d="M0 6l6-6h10l-6 6z" fill="#a5d6ea" />
      <path d="M0 6h10v10H0z" fill="#f3f3f3" stroke="#a3adb1" />
    </Svg>
  ),
  revolve: (
    <Svg>
      <path d="M8 0v16" stroke="#888" strokeDasharray="4 1" />
      <ellipse cx="4" cy="8" rx="3.500" ry="4" fill="#c9d3d8" stroke="#88979e" />
      <ellipse cx="11" cy="8" rx="4" ry="4" fill="#46a4cf" stroke="#2b7ca6" />
      <circle cx="12" cy="8" r="2" fill="#e8f6fc" />
    </Svg>
  ),
  subtract: (
    <Svg>
      <path d="M4 3l3-2h9v10l-3 3h-2q1-7-7-8z" fill="#58b1d9" stroke="#2b86b5" />
      <path d="M5 3h7v9" fill="#eaf6fb" stroke="#eaf6fb" />
      <circle cx="5.500" cy="10.500" r="5" fill="url(#gGrey)" />
    </Svg>
  ),
  mirror: (
    <Svg>
      <path d="M1 2q5 1 4 6-1 4 0 6H1z" fill="#e3f4fb" stroke="#4aa0cc" />
      <path d="M8 1v14" stroke="#888" />
      <path d="M15 2q-5 1-4 6 1 4 0 6h4zM11 8l4-3" fill="#b3dff1" stroke="#4aa0cc" />
    </Svg>
  ),
};

/* One 20px wide cell of a tree row's indentation. */
function Guide({ kind }: { kind: string }) {
  const line = "#c3c7c9";
  return (
    <svg aria-hidden="true" className="h-4 w-5 shrink-0 overflow-visible" viewBox="0 0 20 16" fill="none">
      {kind === "|" && <path d="M8.500 -1v18" stroke={line} />}
      {kind === "T" && <path d="M8.500 -1v18M9 8.500h8" stroke={line} />}
      {kind === "L" && <path d="M8.500 -1v9.500h8.500" stroke={line} />}
      {(kind === ">" || kind === "v") && <path d="M8.500 -1v3M8.500 15v2" stroke={line} />}
      {kind === ">" && <path d="M6 4l4.500 4-4.500 4z" fill="#5b5e61" />}
      {kind === "v" && <path d="M5 6.500h7L8.500 10.500z" fill="#5b5e61" />}
    </svg>
  );
}

function Label({ guides, icon, text }: { guides: string; icon: ReactNode; text: string }) {
  return (
    <span className="flex h-4 items-center whitespace-nowrap">
      {guides.split("").map((g, i) => (
        <Guide key={i} kind={g} />
      ))}
      {icon}
      <span className="ml-[5px]">{text}</span>
    </span>
  );
}

const simTree: [string, ReactNode, string][] = [
  ["", t.studies, "Simulation Studies"],
  [">", t.structure, "Structure 1"],
  ["v", t.fluid, "Fluid 1"],
  [" v", t.domain, "Fluid Domain: FLUID"],
  [" |L", t.copy, "COPY_OF_WATER"],
  [" v", t.boundary, "Boundary Conditions"],
  [" |T", t.velocity, "FlowVelocity 1"],
  [" |L", t.outlet, "OutletPressure 1"],
  [" >", t.thermal, "Thermal Conditions"],
  [" T", t.contacts, "Contacts"],
  [" >", t.fluidSolid, "Fluid-Solid"],
];

const modelTree: [string, ReactNode, string, string][] = [
  ["", t.part, "PRT0001.PRT", "0.000000"],
  ["v", t.design, "Design Items", ""],
  ["|>", t.materials, "Materials", ""],
  ["|v", t.bodies, "Bodies (2)", ""],
  ["| >", t.fluidBody, "FLUID", "0.000000"],
  ["| >", t.body, "AGGITATOR", "0.000000"],
  ["T", t.plane, "RIGHT", ""],
  ["T", t.plane, "TOP", ""],
  ["T", t.plane, "FRONT", ""],
  ["T", t.csys, "PRT_CSYS_DEF", ""],
  [">", t.extrude, "Extrude 1", ""],
  [">", t.revolve, "Revolve 1", ""],
  ["T", t.subtract, "Body Subtract 1", ""],
  [">", t.extrude, "Extrude 2", ""],
  [">", t.mirror, "Mirror 1", ""],
];

function PB({ label, w = "w-[23px]", on, children }: { label: string; w?: string; on?: boolean; children: ReactNode }) {
  return (
    <button
      type="button"
      aria-label={label}
      className={`flex h-6 shrink-0 items-center justify-center ${w} ${on ? "border border-[#b4b8ba] bg-[#dde0e1]" : ""}`}
    >
      {children}
    </button>
  );
}

const BarLine = () => <span className="h-6 w-px shrink-0 bg-[#cdd1d3]" />;

function ScrollArrow({ left, label }: { left?: boolean; label: string }) {
  return (
    <button type="button" aria-label={label} className="flex w-[14px] shrink-0 items-center justify-center">
      <svg aria-hidden="true" className="h-1.5 w-1" viewBox="0 0 4 6">
        <path d={left ? "M4 0v6L0 3z" : "M0 0v6l4-3z"} fill="#8f9395" />
      </svg>
    </button>
  );
}

function SidePanel() {
  return (
    <aside className="flex w-[282px] shrink-0 flex-col border-r-[3px] border-[#dcdfe0] bg-[#f8fafa]">
      <div className="flex h-[25px] shrink-0 bg-[#dadedf]">
        <button type="button" aria-label="Model tree" className="flex w-[31px] items-center justify-center bg-[#f8fafa]">
          <Svg>
            <path d="M3 1h3v3H3zM3 6.500h3v3H3zM3 12h3v3H3zM10.500 6.500h3v3h-3zM4.500 4v2.500M4.500 9.500V12M6 8h4.500" stroke={INK} />
          </Svg>
        </button>
        <button type="button" aria-label="Folders" className="flex w-[31px] items-center justify-center">
          <Svg>
            <path d="M1 1h3l1 1h5v5H1zM4 5h3l1 1h5v5H4zM7 9h3l1 1h5v5H7z" fill="#fdf0d2" stroke="#c79a4c" />
          </Svg>
        </button>
      </div>
      <div className="flex h-[33px] shrink-0 items-center pl-[10px]">
        <PB label="Tree menu" w="w-[15px]">
          <svg aria-hidden="true" className="h-1.5 w-2" viewBox="0 0 8 6">
            <path d="M0 0h8L4 6z" fill="#5b5e61" />
          </svg>
        </PB>
        <PB label="Simulation tree" w="w-[19px]">
          <Svg s="size-[13px]" vb="0 0 13 13">
            <path d="M3.500 1h6v5h-6z" fill="#4cb42c" />
            <path d="M0 7.500h6V13H0zM7 7.500h6V13H7z" fill="#8d9193" />
          </Svg>
        </PB>
        <span className="w-[5px]" />
        <Grip />
        <span className="w-[11px]" />
        <PB label="Expand all">
          <OutlineTree />
        </PB>
        <PB label="Collapse all">
          <Branches />
        </PB>
        <span className="w-[5px]" />
        <BarLine />
        <span className="w-[5px]" />
        <PB label="Tree columns">
          <Columns>
            <path d="M9 6h5l1 1v8H9z" fill="#dedede" stroke="#888" />
          </Columns>
        </PB>
        <span className="ml-auto pr-[4px]">
          <PB label="Tree settings">
            <Svg>
              <Doc />
            </Svg>
          </PB>
        </span>
      </div>
      <div className="mr-[5px] ml-2 flex h-[21px] shrink-0 justify-end border-b border-[#d3d7d8]">
        <div className="w-[233px] border-x border-[#d9dcdd]" />
      </div>
      <ul className="grid h-[194px] shrink-0 auto-rows-fr pl-11 text-[10px] leading-4 text-[#55585b]">
        {simTree.map(([g, icon, text]) => (
          <li key={text} className="flex items-center">
            <Label guides={g} icon={icon} text={text} />
          </li>
        ))}
      </ul>
      <div className="grow" />
      <div className="mr-[5px] ml-2 h-0.5 shrink-0 bg-[#d5d9dc]" />
      <div className="flex h-[31px] shrink-0 items-center pt-[2px] pl-[10px]">
        <PB label="Tree menu" w="w-[15px]">
          <svg aria-hidden="true" className="h-1.5 w-2" viewBox="0 0 8 6">
            <path d="M0 0h8L4 6z" fill="#5b5e61" />
          </svg>
        </PB>
        <PB label="Part tree" w="w-[19px]">
          <Svg s="size-[13px]" vb="0 0 13 13">
            <path d="M0 3l3-3h10v9l-3 4H0z" fill="#7b8083" />
            <path d="M0 3l3-3h10l-3 3z" fill="#c9cccd" />
            <path d="M0 3.500h9.500V13H0z" fill="#4cb42c" />
          </Svg>
        </PB>
        <span className="w-[5px]" />
        <Grip />
        <span className="w-[11px]" />
        <PB label="Expand all">
          <OutlineTree />
        </PB>
        <PB label="Collapse all">
          <Branches />
        </PB>
        <span className="w-[2px]" />
        <PB label="Show columns" w="w-[24px]" on>
          <Columns>
            <Eye x={6} y={9} />
          </Columns>
        </PB>
        <span className="w-[4px]" />
        <BarLine />
        <span className="w-[4px]" />
        <PB label="New body">
          <Svg>
            <path d="M4 4l4-2 5 1v9l-5 4-4-2z" fill="#fbd9a0" stroke="#d0974a" />
            <path d="M8 6v9M8 6l5-3" stroke="#e0b060" />
            <path d="M3 0l1 2.500L6.500 3 4.500 5 5 7.500 3 6 1 7.500 1.500 5-.5 3 2 2.500z" fill="#f39a1e" />
          </Svg>
        </PB>
        <span className="w-[4px]" />
        <BarLine />
        <span className="w-[4px]" />
        <PB label="Tree filters">
          <Svg>
            <path d="M1.500 0.500h3v3h-3zM1.500 12h3v3h-3z" fill="#fff" stroke={INK} />
            <path d="M3 4v8" stroke={INK} />
            <path d="M1.500 6h3v3h-3z" fill={BLUE} />
            <path d="M7 8h9l-3.500 4v3.500h-2V12z" fill="#333" />
          </Svg>
        </PB>
        <span className="w-[2px]" />
        <PB label="Tree columns">
          <Columns>
            <path d="M8 6h5l2 2v7H8z" fill="#f1f1f1" stroke="#777" />
            <path d="M10 10h4M10 12.500h4" stroke="#888" />
          </Columns>
        </PB>
        <span className="w-[4px]" />
        <BarLine />
        <span className="ml-auto flex items-center pr-[4px]">
          <PB label="More tools" w="w-[22px]">
            <Svg s="size-2" vb="0 0 8 8">
              <path d="M0.500 1l3 3-3 3M4 1l3 3-3 3" stroke="#4a4a4a" strokeWidth="1.300" />
            </Svg>
          </PB>
          <PB label="Tree settings">
            <Svg>
              <Doc />
            </Svg>
          </PB>
        </span>
      </div>
      <div className="flex h-[28px] shrink-0 items-center pl-[11px]">
        <Svg>
          <path d="M1.500 1.500h13L10 7.500V15l-4-2V7.500z" fill="#f1f1f1" stroke="#6d7073" strokeWidth="1.200" />
        </Svg>
        <div className="ml-[3px] flex h-[27px] w-[203px] items-center border border-[#bcc0c2] bg-white">
          <input aria-label="Filter tree" className="min-w-0 grow px-1 text-[11px] outline-none" />
          <button type="button" aria-label="Clear filter" className="flex w-[18px] items-center justify-center">
            <Svg s="size-2" vb="0 0 8 8">
              <path d="M1 1l6 6M7 1L1 7" stroke="#999" strokeWidth="1.300" />
            </Svg>
          </button>
        </div>
        <PB label="Filter options" w="w-[18px]">
          <Caret />
        </PB>
        <PB label="Add filter">
          <Svg s="size-3" vb="0 0 12 12">
            <path d="M4.500 0.500h3v4h4v3h-4v4h-3v-4h-4v-3h4z" fill="#8f9395" />
          </Svg>
        </PB>
      </div>
      <div className="h-[5px] shrink-0" />
      <table className="mr-[5px] ml-2 h-[286px] shrink-0 table-fixed border-collapse text-[10px] leading-4 text-[#55585b]">
        <thead>
          <tr className="h-[21px]">
            <th aria-label="Name" className="w-[190px] border-b border-[#cdd1d3] p-0" />
            <th className="border-b border-l border-[#cdd1d3] p-0 pt-0.5 pl-[5px] text-left text-[11px] leading-4 font-normal">
              PRO_MP_VOL
            </th>
          </tr>
        </thead>
        <tbody>
          {modelTree.map(([g, icon, text, value]) => (
            <tr key={text}>
              <td className="p-0 pl-[2px] align-middle">
                <Label guides={g} icon={icon} text={text} />
              </td>
              <td className="border-l border-[#e6e9ea] p-0 align-middle">{value}</td>
            </tr>
          ))}
        </tbody>
      </table>
      <div className="mt-1 mr-[5px] ml-[10px] flex h-[5px] shrink-0 items-center border-l border-[#5cc03c]">
        <div className="h-px grow bg-[#5cc03c]" />
      </div>
      <div className="ml-[198px] h-[56px] w-px shrink-0 bg-[#eceeef]" />
      <div className="mr-[5px] mb-[5px] ml-2 flex h-[15px] shrink-0">
        <div className="flex w-[190px] justify-between border border-[#dfe2e3] bg-[#fbfcfc]">
          <ScrollArrow left label="Scroll names left" />
          <ScrollArrow label="Scroll names right" />
        </div>
        <div className="flex grow border border-[#dfe2e3] bg-[#fbfcfc]">
          <ScrollArrow left label="Scroll values left" />
          <div className="w-[22px] border border-[#d0d3d4] bg-white" />
          <div className="grow bg-[#dcdfdf]" />
          <ScrollArrow label="Scroll values right" />
        </div>
      </div>
    </aside>
  );
}

/* ---------- graphics area ---------- */

const viewIcons: [string, ReactNode, boolean][] = [
  ["Appearance", <><ellipse cx="6" cy="4" rx="6" ry="3.500" fill="#9b9ea0" /><circle cx="6" cy="4" r="1.500" fill="#eee" /><circle cx="11" cy="11" r="4" fill="#e2e2e2" stroke="#a3a3a3" strokeWidth="1.500" /><path d="M6 8l4-1" stroke="#a3a3a3" strokeWidth="2" /></>, false],
  ["Refit", <><path d="M1 1h14v14H1z" fill="#fafcfd" stroke="#a5a9ab" /><circle cx="8" cy="7.500" r="4" fill="#d8f0fa" stroke="#2b7ca6" strokeWidth="1.500" /><path d="M11 10.500l3 3" stroke="#6d7174" strokeWidth="2" /></>, false],
  ["Zoom in", <><circle cx="6.500" cy="6.500" r="5.500" fill="#e4f4fb" stroke="#8fb4c6" strokeWidth="1.300" /><path d="M3.500 6.500h6M6.500 3.500v6" stroke="#17668c" strokeWidth="2" /><path d="M10.500 10.500l4.500 5" stroke="#2b86b5" strokeWidth="2.500" /></>, false],
  ["Zoom out", <><circle cx="6.500" cy="6.500" r="5.500" fill="#e4f4fb" stroke="#8fb4c6" strokeWidth="1.300" /><path d="M3.500 6.500h6" stroke="#17668c" strokeWidth="2" /><path d="M10.500 10.500l4.500 5" stroke="#8d9193" strokeWidth="2.500" /></>, false],
  ["Repaint", <><path d="M1 1h14v14H1z" fill="#f6fafc" stroke="#9ba4a8" /><path d="M15 5v10H3Q12 12 15 5z" fill="#2b86b5" /><path d="M1 1h14v3H1z" fill="#9fcfe4" /><path d="M4 12L13 3l1 1-9 9-2 1z" fill="#fff" stroke="#446" strokeWidth="0.500" /></>, false],
  ["Rendering", <><path d="M0 9q5 3 6-3Q8 0 16 1q-4 3-4 6-3 6-12 2z" fill="#a4a7a9" /><path d="M1 8q4 2 7-2 2-4 6-4" stroke="#dcdedf" strokeWidth="1.500" /><path d="M2 13q6 3 10-4l4-2q0 5-5 7-4 2-9-1z" fill="#8b8e90" /><path d="M18 14v3h-3z" fill="#444" /></>, false],
  ["Display style", <><path d="M1 5l4-4h10v10l-4 4H1z" fill="#e3f3fa" stroke="#1f6f96" strokeWidth="1.300" /><path d="M1 5h10v10M11 5l4-4v10l-4 4" fill="#5ab0d8" stroke="#1f6f96" strokeWidth="1.300" /><path d="M1 5h10v10H1z" fill="#f6fbfd" stroke="#1f6f96" strokeWidth="1.300" /><path d="M18 14v3h-3z" fill="#444" /></>, false],
  ["Annotation display", <><path d="M1 2h7q6 1 6 9M1 6h5q4 1 4 6M8 2L6 6" stroke="#55595c" strokeWidth="1.200" /><path d="M8 2q6 1 6 9h-4q0-4-4-5z" fill="#a9d9ec" stroke="#55595c" /><Eye x={7} y={10} /></>, true],
  ["Saved views", <><path d="M4 2l5-2 5 5v9H3L0 8z" fill="#9bd6ef" stroke="#3f93bb" strokeWidth="0.800" /><path d="M0 8h9l5-3M9 8v6M4 2l5 6" stroke="#e9f7fc" /><path d="M9 8h6v7H9z" fill="#ddd" stroke="#999" strokeWidth="0.800" /><path d="M18 14v3h-3z" fill="#444" /></>, false],
  ["View manager", <><path d="M1 1h13v12H1z" fill="#f1f1f1" stroke="#777" /><path d="M1 4h13M1 7h13M1 10h13M5 1v12" stroke="#888" /><path d="M6 9h2l1-1h4l1 1h2v7H6z" fill="#333" /><circle cx="11" cy="12.500" r="2" fill="#888" /></>, false],
  ["Perspective", <><path d="M0 5l8-4 8 1-2 10-6 3-7-3z" fill="#9fd4ea" stroke="#5fa3c2" /><path d="M0 5l8 2 8-5M8 7v8M4 3l6 2M4 6v7M1 9l7 2 6-3" stroke="#e8f5fa" /></>, false],
  ["Section", <><path d="M1 5l4-4h10v10l-4 4H1z" stroke="#b9bfc2" strokeDasharray="2 1" fill="#eaf4f8" /><path d="M0 15L15 0" stroke="#1f5f85" strokeWidth="1.500" /><path d="M18 14v3h-3z" fill="#444" /></>, false],
  ["Datum display", <><path d="M1 0l4 4M5 0L1 4M12 1L3 14M11 6v5h5M11 11l-3 4M8 5l2-3" stroke="#846c38" strokeWidth="1.400" strokeDasharray="4 1" /><path d="M17 14v3h-3z" fill="#444" /></>, false],
  ["3D notes", <><path d="M0 1h9v5H0z" fill="#fdfae6" stroke="#8c8f75" /><path d="M9 3h5v5" stroke={INK} /><path d="M12 6h4l-2 3z" fill={INK} /><Eye x={7} y={10} /></>, false],
  ["Spin center", <><path d="M2 2l5 6h7M7 8l-5 6" stroke="#6d7174" strokeWidth="1.500" /><circle cx="2.500" cy="2.500" r="2.500" fill="#5cb35c" /><circle cx="13.500" cy="8" r="2.500" fill="#e37f83" /><circle cx="2.500" cy="13.500" r="2.500" fill="#2c7a94" /></>, false],
  ["Simulate", <><g transform="scale(0.5)"><Triangle /></g><circle cx="12.500" cy="13" r="3.500" fill="#e8363c" /><path d="M11.500 11l3 2-3 2z" fill="#fff" /></>, false],
  ["Pause", <path d="M3 2h4v12H3zM9.500 2h4v12h-4z" fill="#a2a5a7" />, false],
  ["Result display", <><path d="M0 3h16v11H5q5-3 3-6T0 5z" fill="#cdcfd0" stroke="#b8bbbc" /><path d="M1 4q10 1 9 5-1 3-5 4" stroke="#b0b3b4" strokeWidth="1.500" /></>, false],
];

function Model() {
  const edge = "#8f8f8f";
  const left = "M576.500 596L678 582A20 54.800 -8.400 0 0 690.500 691.700L591 705A20 54.800 -8.400 0 0 576.500 596z";
  const right = "M1344 489L1446 475.500 1461 584 1359 598.300A20 54.800 -8.800 0 0 1344 489z";
  return (
    <svg className="block h-full w-full" viewBox="283 162 1637 886" fill="none" role="img" aria-label="Agitator inside a fluid box">
      <path d="M621 427L1289.500 334.500 1432 494 1414.500 753.500 747.500 845.500 604 686.500z" fill="#bbbbbb" />
      <path d="M621 427L765.500 587 747.500 845.500 604 686.500z" fill="#bebebe" />
      <path d="M1289.500 334.500L1432 494 1414.500 753.500 1271 594z" fill="#bdbdbd" />
      <g>
        <path d={left} fill="#c6c6c6" />
        <path d={left} fill="#9e9e9e" clipPath="url(#boxClip)" />
        <ellipse cx="583.500" cy="650.500" rx="20" ry="54.800" transform="rotate(-8.400 583.500 650.500)" fill="#c0bec0" stroke={edge} />
        <ellipse cx="684.300" cy="636.800" rx="20" ry="54.800" transform="rotate(-8.400 684.300 636.800)" stroke={edge} />
      </g>
      <g>
        <path d={right} fill="#cdcdcd" />
        <path d={right} fill="#9e9e9e" clipPath="url(#boxClip)" />
        <ellipse cx="1351.500" cy="543.700" rx="20.500" ry="54.800" transform="rotate(-8.800 1351.500 543.700)" fill="#bebebe" stroke={edge} />
        <ellipse cx="1453" cy="529.700" rx="20" ry="54.800" transform="rotate(-8.400 1453 529.700)" fill="#bfbfbf" stroke={edge} />
      </g>
      <g stroke={edge}>
        <path d="M621 427L1289.500 334.500 1432 494 1414.500 753.500 747.500 845.500 604 686.500z" />
        <path d="M621 427L765.500 587 747.500 845.500M765.500 587L1432 494M604 686.500L1271 594 1289.500 334.500M1271 594L1414.500 753.500" />
      </g>
      <path d="M997 650v24q15 12 32 0v-24z" fill="url(#gStem)" />
      <path d="M995 670.500l3 2.500q3 7 16 7 12 0 14-6l2-1.500" stroke="#3d7fd6" strokeWidth="1.300" />
      <path d="M865 531L862 573A156.800 70.200 5 0 0 1175 595.500L1177.500 553.500z" fill="url(#gSide)" />
      <path d="M862 573A156.800 70.200 5 0 0 1175 595.500" stroke="#5b84d8" />
      <ellipse cx="1021.300" cy="542.300" rx="156.800" ry="70.200" transform="rotate(5 1021.300 542.300)" fill="#9195a1" />
      <path d="M865 531.300A156.800 70.200 5 0 1 1177.500 553.300" stroke="#72757f" />
      <path d="M865 531.300A156.800 70.200 5 0 0 1177.500 553.300" stroke="#5b84d8" />
      <path d="M874 571.500L1172 530" stroke="#808490" />
      <path d="M877.500 563l-2 41" stroke="#d6d8dc" strokeWidth="1.200" />
      <path d="M1016 617l9 9.500" stroke="#3c0062" strokeWidth="5" strokeLinecap="round" />
      <circle cx="1015.500" cy="616" r="5" fill="#3c0062" />
      <path d="M545.500 655.500L568 652.500" stroke="#d38b14" strokeWidth="4" />
      <path d="M567 647l6 2v-2l11 4.500-10 6.500v-2l-7 2z" fill="#c98312" />
      <circle cx="1452" cy="530" r="5.500" fill="url(#gGold)" />
      <path d="M575.500 292v15.500l3.500-3.200 3 6.500 2.500-1.200-3-6.300h5z" fill="#fff" stroke="#111" />
    </svg>
  );
}

function Viewport() {
  return (
    <main className="relative min-w-0 grow overflow-hidden bg-[#fefefe]">
      <Model />
      <div
        role="toolbar"
        aria-label="Graphics"
        className="absolute top-[5px] left-[586px] flex h-[31px] w-[466px] items-center border border-[#b9bdbf] bg-[#f8f9fb] px-0.5"
      >
        {viewIcons.map(([label, art, on]) => (
          <button
            key={label}
            type="button"
            aria-label={label}
            className={`flex h-6 flex-1 items-center justify-center ${on ? "border border-[#b4b8ba] bg-[#dcdfe0]" : ""}`}
          >
            <Svg>{art}</Svg>
          </button>
        ))}
      </div>
      <div className="absolute right-0 bottom-0 h-[127px] w-[116px] border-t border-l border-[#aeb1b3] bg-[#fefefe]">
        <svg aria-label="View orientation" className="block h-full w-full" viewBox="1805 922 115 126" fill="none">
          <g stroke="#5d5478">
            <path d="M1831.500 948L1830 981 1828.500 1003.500 1884 996M1828.500 1003.500L1852 1030" />
            <path d="M1830 981L1853 977.500 1863.500 988.500 1840 992zM1840 992L1838.500 1015 1862.500 1011.500 1863.500 988.500M1853 977.500L1852 1000.500 1862.500 1011.500M1838.500 1015L1828.500 1003.500" />
          </g>
          <g fontFamily="Noto Sans" fontSize="11" textAnchor="middle" fill="#4a3a78">
            <text x="1832" y="949">Y</text>
            <text x="1888" y="1000">X</text>
            <text x="1853" y="1038">Z</text>
          </g>
        </svg>
      </div>
    </main>
  );
}

function StatusBar() {
  return (
    <footer className="flex h-8 shrink-0 items-center border-t border-[#ccd0d1] bg-[#f7f9f9] pt-px pl-[5px]">
      <PB label="Navigator" w="w-[22px]" on>
        <Svg>
          <path d="M1 1h14v13H1z" fill="#f4f4f4" stroke="#8a8e90" />
          <path d="M1 4h14" stroke="#8a8e90" />
          <path d="M1 4h5v10H1z" fill="#bfe4f3" stroke="#2b86b5" />
          <Eye x={6} y={9} />
        </Svg>
      </PB>
      <PB label="Browser" w="w-[27px]">
        <Svg>
          <circle cx="8" cy="8" r="7" fill="url(#gBall)" />
          <path d="M5 4q3 1 2 4l3 2-1 4" stroke="#1c6f9c" strokeWidth="2" />
          <ellipse cx="8" cy="8" rx="9" ry="4" transform="rotate(-42 8 8)" stroke="#6d7478" />
        </Svg>
      </PB>
      <PB label="Full screen" w="w-[20px]">
        <Svg>
          <path d="M0.500 0.500h15v15h-15z" fill="#e2eef4" stroke="#2f6f90" />
        </Svg>
      </PB>
      <span className="w-[8px]" />
      <BarLine />
      <div className="grow" />
      <BarLine />
      <span className="w-[62px]" />
      <BarLine />
      <span className="w-[3px]" />
      <BarLine />
      <PB label="Find" w="w-[27px]">
        <Svg>
          <path d="M3 1h3l1 4v10H0V9zM10 1h3l3 8v6H9V5z" fill="url(#gDark)" />
          <path d="M6 5h4v5H6z" fill="#333" />
        </Svg>
      </PB>
      <PB label="Find options" w="w-[10px]">
        <Caret />
      </PB>
      <span className="w-[3px]" />
      <BarLine />
      <PB label="Box select" w="w-[27px]">
        <Svg>
          <path d="M1 3h14v10H1z" stroke="#5b5e61" strokeWidth="1.500" strokeDasharray="3 2" />
        </Svg>
      </PB>
      <PB label="Select options" w="w-[10px]">
        <Caret />
      </PB>
      <span className="w-[4px]" />
      <PB label="Selection view" w="w-[26px]">
        <Svg>
          <path d="M0.500 0.500h15v15h-15z" fill="#c7e8f5" stroke="#17668c" strokeDasharray="2 2" />
          <Eye x={1} y={1} />
          <path d="M8 5v9l2-2 1.500 3.500 1.500-.5-1.500-3.500h3z" fill="#eee" stroke="#444" />
        </Svg>
      </PB>
      <div className="relative mr-[15px] ml-[94px] h-[23px] w-[174px]">
        <select
          aria-label="Selection filter"
          className="block h-full w-full appearance-none rounded-none border border-[#b9bdbf] bg-[#f7f9f9] pl-[6px] text-[12px] leading-5 text-[#66696c]"
        >
          <option>Geometry</option>
        </select>
        <span className="pointer-events-none absolute inset-y-0 right-0 flex w-4 items-center justify-center border border-[#b9bdbf]">
          <Caret />
        </span>
      </div>
    </footer>
  );
}

export default function App() {
  return (
    <div className="flex h-screen flex-col overflow-hidden border-l border-[#3c3f42] bg-[#f8fafa] font-['Open_Sans','Noto_Sans',sans-serif]">
      <Defs />
      <TitleBar />
      <MenuBar />
      <Ribbon />
      <div className="flex min-h-0 grow">
        <SidePanel />
        <Viewport />
      </div>
      <StatusBar />
    </div>
  );
}
